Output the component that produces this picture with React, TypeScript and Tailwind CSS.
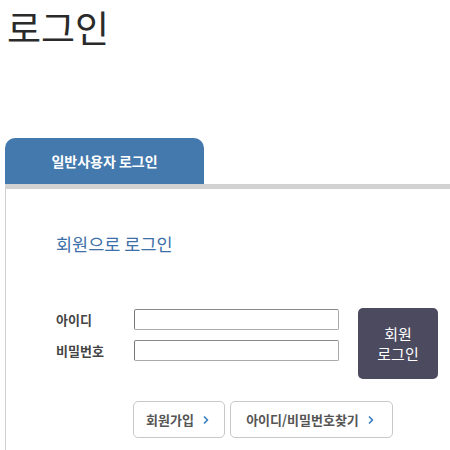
import { ChevronRight } from 'lucide-react';

function LinkButton({ label, width }: { label: string; width: string }) {
  return (
    <button
      className={`${width} h-[37px] flex items-center justify-center gap-[6px] bg-white border border-[#c8c8c8] rounded-[5px] text-[13px] font-bold text-[#555]`}
    >
      <span>{label}</span>
      <ChevronRight className="w-[12px] h-[12px] text-[#3a7fc1]" strokeWidth={3.5} />
    </button>
  );
}

export default function App() {
  return (
    <div
      className="w-[450px] h-[450px] overflow-hidden bg-white"
      style={{ fontFamily: '"Noto Sans CJK KR", "Noto Sans", sans-serif' }}
    >
      <h1 className="pl-[7px] pt-[3px] text-[37px] leading-[48px] text-[#2a2a2a]">로그인</h1>

      <div className="mt-[87px] ml-[5px]">
        <div className="w-[199px] h-[46px] bg-[#4479ad] rounded-t-[10px] flex items-center justify-center text-white text-[14px] font-bold">
          일반사용자 로그인
        </div>
        <div className="h-[5px] bg-[#d2d2d2]" />

        <div className="border-l border-[#cfcfcf] h-[300px] pl-[50px]">
          <h2 className="pt-[43px] text-[17.5px] leading-[24px] text-[#3d6fa8]">회원으로 로그인</h2>

          <div className="mt-[52px] flex">
            <div className="flex flex-col gap-[10px] pt-[1px]">
              <div className="flex items-center h-[21px]">
                <span className="w-[78px] text-[13px] font-bold text-[#444]">아이디</span>
                <input className="w-[205px] h-[21px] border border-[#a9a9a9] border-l-[#777] border-t-[#888] rounded-[2px]" />
              </div>
              <div className="flex items-center h-[21px]">
                <span className="w-[78px] text-[13px] font-bold text-[#444]">비밀번호</span>
                <input className="w-[205px] h-[21px] border border-[#a9a9a9] border-l-[#777] border-t-[#888] rounded-[2px]" />
              </div>
            </div>
            <button className="ml-[19px] w-[80px] h-[71px] bg-[#4b4a5f] rounded-[5px] text-white text-[15px] leading-[20px] flex flex-col items-center justify-center">
              <span>회원</span>
              <span>로그인</span>
            </button>
          </div>

          <div className="mt-[22px] ml-[77px] flex gap-[5px]">
            <LinkButton label="회원가입" width="w-[92px]" />
            <LinkButton label="아이디/비밀번호찾기" width="w-[163px]" />
          </div>
        </div>
      </div>
    </div>
  );
}
